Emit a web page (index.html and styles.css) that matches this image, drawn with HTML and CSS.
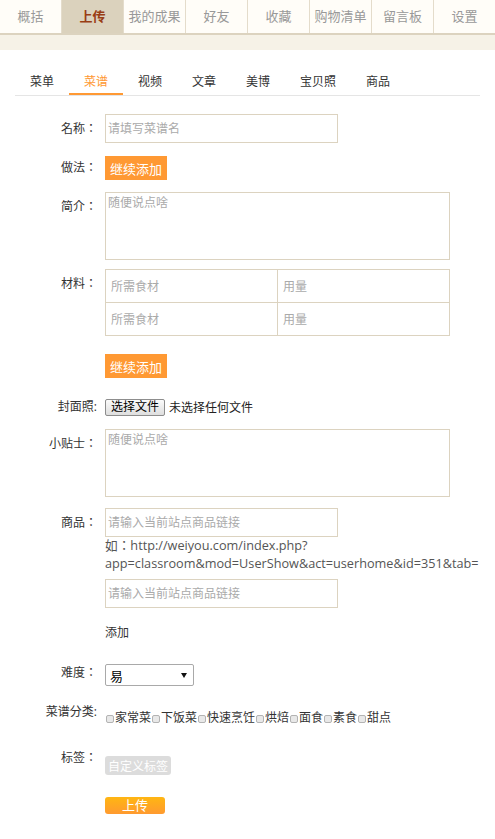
FILE: index.html
```html
<!DOCTYPE html>
<html lang="zh-CN">
<head>
    <meta charset="UTF-8">
    <meta name="viewport" content="width=device-width, initial-scale=1.0">
    <title>上传菜谱</title>
    <link rel="stylesheet" href="styles.css">
</head>
<body>
    <!-- 顶部导航 -->
    <div class="nav">
        <a class="nav-item">概括</a>
        <a class="nav-item active">上传</a>
        <a class="nav-item">我的成果</a>
        <a class="nav-item">好友</a>
        <a class="nav-item">收藏</a>
        <a class="nav-item">购物清单</a>
        <a class="nav-item">留言板</a>
        <a class="nav-item">设置</a>
    </div>
    <div class="nav-band"></div>

    <div class="content">
        <ul class="tabs">
            <li>菜单</li>
            <li class="active">菜谱</li>
            <li>视频</li>
            <li>文章</li>
            <li>美博</li>
            <li>宝贝照</li>
            <li>商品</li>
        </ul>

        <form class="form">
            <div class="row row-name">
                <label class="label">名称：</label>
                <div class="field"><input class="text" type="text" placeholder="请填写菜谱名"></div>
            </div>

            <div class="row row-method">
                <label class="label">做法：</label>
                <div class="field"><button type="button" class="btn-orange">继续添加</button></div>
            </div>

            <div class="row row-intro">
                <label class="label">简介：</label>
                <div class="field"><textarea class="area" placeholder="随便说点啥"></textarea></div>
            </div>

            <div class="row row-material">
                <label class="label">材料：</label>
                <div class="field">
                    <div class="materials">
                        <input type="text" placeholder="所需食材">
                        <input type="text" placeholder="用量">
                        <input type="text" placeholder="所需食材">
                        <input type="text" placeholder="用量">
                    </div>
                </div>
            </div>

            <div class="row row-more">
                <label class="label"></label>
                <div class="field"><button type="button" class="btn-orange">继续添加</button></div>
            </div>

            <div class="row row-cover">
                <label class="label">封面照:</label>
                <div class="field field-file">
                    <button type="button" class="file-btn">选择文件</button>
                    <span class="file-text">未选择任何文件</span>
                </div>
            </div>

            <div class="row row-tips">
                <label class="label">小贴士：</label>
                <div class="field"><textarea class="area" placeholder="随便说点啥"></textarea></div>
            </div>

            <div class="row row-goods">
                <label class="label">商品：</label>
                <div class="field">
                    <input class="text" type="text" placeholder="请输入当前站点商品链接">
                    <p class="help">如：http://weiyou.com/index.php?<br>app=classroom&amp;mod=UserShow&amp;act=userhome&amp;id=351&amp;tab=</p>
                    <input class="text text-second" type="text" placeholder="请输入当前站点商品链接">
                    <p class="add-link">添加</p>
                </div>
            </div>

            <div class="row row-level">
                <label class="label">难度：</label>
                <div class="field">
                    <div class="select"><span>易</span><span class="arrow"></span></div>
                </div>
            </div>

            <div class="row row-cate">
                <label class="label">菜谱分类:</label>
                <div class="field">
                    <div class="checks">
                        <label><input type="checkbox">家常菜</label><label><input type="checkbox">下饭菜</label><label><input type="checkbox">快速烹饪</label><label><input type="checkbox">烘焙</label><label><input type="checkbox">面食</label><label><input type="checkbox">素食</label><label><input type="checkbox">甜点</label>
                    </div>
                </div>
            </div>

            <div class="row row-tag">
                <label class="label">标签：</label>
                <div class="field"><button type="button" class="btn-tag">自定义标签</button></div>
            </div>

            <div class="row row-submit">
                <label class="label"></label>
                <div class="field"><button type="button" class="btn-submit">上传</button></div>
            </div>
        </form>
    </div>
</body>
</html>
```

FILE: styles.css
```css
* {
    margin: 0;
    padding: 0;
    box-sizing: border-box;
}

body {
    font-family: "Open Sans", "Noto Sans CJK SC", sans-serif;
    font-size: 12px;
    color: #333;
    background-color: #fff;
}

/* 顶部导航 */
.nav {
    display: flex;
    height: 35px;
    background-color: #fffdf8;
    border-bottom: 2px solid #dcd3bf;
}

.nav-item {
    flex: 1;
    text-align: center;
    line-height: 33px;
    font-size: 13px;
    color: #999;
    border-right: 1px solid #e4dccb;
}

.nav-item:last-child {
    border-right: none;
}

.nav-item.active {
    background-color: #dbd2bd;
    color: #993d14;
    font-weight: bold;
}

.nav-band {
    height: 15px;
    background-color: #f6f2e7;
}

/* 内容区 */
.content {
    margin: 0 15px;
}

.tabs {
    display: flex;
    list-style: none;
    margin-top: 19px;
    border-bottom: 1px solid #e5e5e5;
}

.tabs li {
    padding: 2px 15px 0;
    line-height: 22px;
    border-bottom: 2px solid transparent;
    color: #333;
}

.tabs li.active {
    color: #ff9933;
    border-bottom-color: #ff9933;
}

/* 表单 */
.form {
    margin-top: 18px;
}

.row {
    display: flex;
    align-items: flex-start;
    margin-bottom: 9px;
}

/* 冒号用居中的字形 */
.label {
    flex: none;
    width: 82px;
    margin-right: 8px;
    text-align: right;
    line-height: 30px;
    min-height: 30px;
    color: #333;
    font-family: "Open Sans", "Noto Sans CJK JP", sans-serif;
    font-feature-settings: "locl" 0;
}

.field {
    flex: 1;
}

input, textarea, button {
    font: inherit;
}

input::placeholder,
textarea::placeholder {
    color: #aaa;
}

.text {
    display: block;
    width: 233px;
    height: 29px;
    padding: 0 2px;
    border: 1px solid #dcd3c0;
    outline: none;
}

.area {
    display: block;
    width: 345px;
    height: 68px;
    padding: 2px;
    border: 1px solid #dcd3c0;
    resize: none;
    outline: none;
    line-height: 16px;
}

.btn-orange {
    margin-top: 3px;
    width: 62px;
    height: 24px;
    border: none;
    background-color: #ff9933;
    color: #fff;
    font-size: 13px;
}

.row-material {
    margin-bottom: 18px;
}

.materials {
    width: 345px;
    display: grid;
    grid-template-columns: 1fr 1fr;
    border-top: 1px solid #dcd3c0;
    border-left: 1px solid #dcd3c0;
}

.materials input {
    height: 33px;
    min-width: 0;
    padding-left: 5px;
    border: none;
    border-right: 1px solid #dcd3c0;
    border-bottom: 1px solid #dcd3c0;
    outline: none;
}

.row-more {
    margin-bottom: 8px;
}

.row-more .btn-orange {
    margin-top: 0;
}

.row-cover {
    margin-bottom: 7px;
}

.field-file {
    display: flex;
    align-items: center;
    height: 30px;
}

.file-btn {
    height: 17px;
    padding: 0 5px;
    line-height: 14px;
    font-size: 12px;
    color: #000;
    border: 1px solid #8d8d8d;
    border-radius: 2px;
    background: linear-gradient(#fbfbfb, #dedede);
}

.file-text {
    margin-left: 4px;
    color: #222;
}

.row-tips {
    margin-bottom: 11px;
}

.help {
    margin-top: -1px;
    font-family: "Open Sans", "Noto Sans CJK JP", sans-serif;
    font-feature-settings: "locl" 0;
    font-size: 12.7px;
    line-height: 18px;
    color: #555;
    white-space: nowrap;
}

.text-second {
    margin-top: 7px;
}

.add-link {
    margin-top: 17px;
    line-height: 16px;
    color: #333;
}

.row-goods {
    margin-bottom: 17px;
}

.select {
    margin-top: 6px;
    width: 89px;
    height: 22px;
    padding: 0 6px 0 4px;
    display: flex;
    align-items: center;
    justify-content: space-between;
    border: 1px solid #a9a9a9;
    border-radius: 2px;
    font-size: 13px;
    color: #000;
}

/* 下拉箭头 */
.select .arrow {
    width: 0;
    height: 0;
    border-left: 3px solid transparent;
    border-right: 3px solid transparent;
    border-top: 5px solid #111;
}

.row-cate {
    margin-bottom: 16px;
}

.checks {
    margin-top: 13px;
    line-height: 16px;
    white-space: nowrap;
}

.checks input {
    appearance: none;
    width: 8px;
    height: 8px;
    margin: 0 1px;
    border: 1px solid #b3b3b3;
    border-radius: 2px;
    background-color: #e8e8e8;
    vertical-align: -1px;
}

.row-tag {
    margin-bottom: 22px;
}

.btn-tag {
    margin-top: 13px;
    height: 19px;
    padding: 0 3px;
    border: none;
    border-radius: 3px;
    background-color: #dcdcdc;
    color: #fff;
    font-size: 12px;
}

.row-submit .label {
    min-height: 17px;
    line-height: 17px;
}

.btn-submit {
    width: 60px;
    height: 17px;
    border: none;
    border-radius: 3px;
    background: linear-gradient(#ffb612, #ff9a30);
    color: #fff;
    font-size: 13px;
    line-height: 17px;
}
```
